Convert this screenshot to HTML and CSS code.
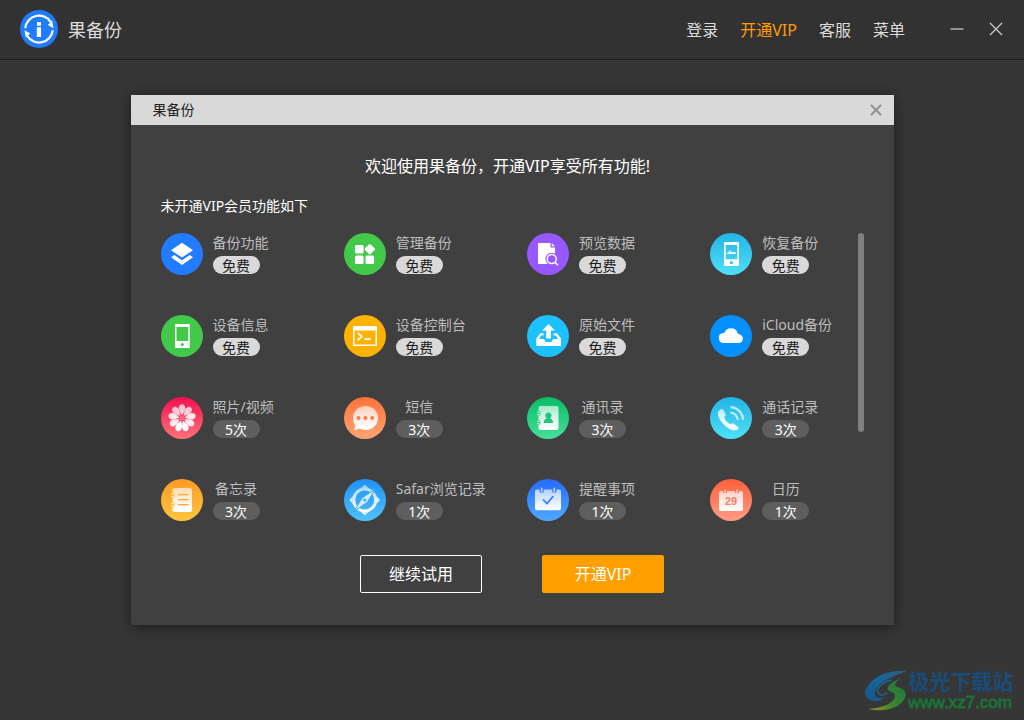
FILE: index.html
```html
<!DOCTYPE html>
<html lang="zh-CN">
<head>
<meta charset="utf-8">
<meta name="viewport" content="width=device-width, initial-scale=1">
<title>果备份</title>
<link rel="stylesheet" href="styles.css">
</head>
<body>
<svg class="defs" width="0" height="0" aria-hidden="true">
  <defs>
    <linearGradient id="g-cyan" x2="0" y2="1"><stop stop-color="#22b4e6"/><stop offset="1" stop-color="#4fe0f8"/></linearGradient>
    <linearGradient id="g-rose" x2="0" y2="1"><stop stop-color="#f40f50"/><stop offset="1" stop-color="#ff7277"/></linearGradient>
    <linearGradient id="g-orange" x2="0" y2="1"><stop stop-color="#ff7239"/><stop offset="1" stop-color="#ffa575"/></linearGradient>
    <linearGradient id="g-green" x2="0" y2="1"><stop stop-color="#07bd66"/><stop offset="1" stop-color="#47df99"/></linearGradient>
    <linearGradient id="g-amber" x2="0" y2="1"><stop stop-color="#ff9928"/><stop offset="1" stop-color="#fcc63d"/></linearGradient>
    <linearGradient id="g-sky" x2="0" y2="1"><stop stop-color="#2091f5"/><stop offset="1" stop-color="#4fc1fc"/></linearGradient>
    <linearGradient id="g-blue" x2="0" y2="1"><stop stop-color="#266aff"/><stop offset="1" stop-color="#50a9ff"/></linearGradient>
    <linearGradient id="g-coral" x2="0" y2="1"><stop stop-color="#ff603a"/><stop offset="1" stop-color="#ff9c84"/></linearGradient>
    <linearGradient id="g-white" gradientUnits="userSpaceOnUse" x1="0" y1="8" x2="0" y2="32"><stop stop-color="#fff" stop-opacity=".6"/><stop offset="1" stop-color="#fff"/></linearGradient>
    <linearGradient id="g-wave" x1="1" y1="0" x2="0" y2="1"><stop stop-color="#2a5f80"/><stop offset=".5" stop-color="#17659b"/><stop offset="1" stop-color="#175487"/></linearGradient>
    <linearGradient id="g-leaf" x1="1" y1="0" x2="0" y2="1"><stop stop-color="#197542"/><stop offset=".6" stop-color="#3d8530"/><stop offset="1" stop-color="#a09025"/></linearGradient>
  </defs>
</svg>

<header class="topbar">
  <div class="brand">
    <svg class="brand-logo" viewBox="0 0 38 38" aria-hidden="true">
      <circle cx="19" cy="19" r="19" fill="#1f7cff"/>
      <g fill="none" stroke="#fff" stroke-width="2.2">
        <path d="M5.300 18.200A13.800 13.800 0 0 1 30.600 11.800"/>
        <path d="M32.700 20.400A13.800 13.800 0 0 1 7.400 26.200"/>
      </g>
      <path d="M27.800 14.900 33.500 18.200 32.200 10.600zM10.200 23.600 4.500 20.200 5.800 27.600z" fill="#fff"/>
      <path d="M17 12h4v3.800h-4zM16.800 17.200H21V27h-4.200z" fill="#fff"/>
    </svg>
    <span>果备份</span>
  </div>
  <nav class="menu">
    <a href="#login">登录</a>
    <a class="vip" href="#vip">开通VIP</a>
    <a href="#service">客服</a>
    <a href="#menu">菜单</a>
  </nav>
  <div class="window-controls">
    <button type="button" aria-label="最小化"><svg viewBox="0 0 14 14"><path d="M.5 7h13"/></svg></button>
    <button type="button" aria-label="关闭"><svg viewBox="0 0 14 14"><path d="M1 1l12 12M13 1 1 13"/></svg></button>
  </div>
</header>

<main class="stage">
  <section class="dialog" role="dialog" aria-labelledby="dialog-title">
    <div class="dialog-bar">
      <h1 id="dialog-title">果备份</h1>
      <button type="button" aria-label="关闭"><svg viewBox="0 0 12 12"><path d="M1 1l10 10M11 1 1 11"/></svg></button>
    </div>
    <p class="welcome">欢迎使用果备份，开通VIP享受所有功能!</p>
    <h2 class="subtitle">未开通VIP会员功能如下</h2>

    <div class="features-wrap">
      <ul class="features">
        <li class="feature">
          <svg viewBox="0 0 42 42"><circle cx="21" cy="21" r="21" fill="#217cff"/><g fill="#fff"><path d="M21 9.800 32 17.300 21 24.500 10 17.300z"/><path d="M10 24.200 13.300 22 21 27.300 28.700 22 32 24.200 21 32z"/></g></svg>
          <div class="info"><span class="name">备份功能</span><span class="badge free">免费</span></div>
        </li>
        <li class="feature">
          <svg viewBox="0 0 42 42"><circle cx="21" cy="21" r="21" fill="#42c94a"/><g fill="#fff"><rect x="11" y="12" width="8.600" height="8.600" rx="1.500"/><rect x="11" y="22.400" width="8.600" height="8.600" rx="1.500"/><rect x="21.500" y="22.400" width="8.600" height="8.600" rx="1.500"/><rect x="21.800" y="12.200" width="8" height="8" rx="1.200" transform="rotate(45 25.800 16.200)"/></g></svg>
          <div class="info"><span class="name">管理备份</span><span class="badge free">免费</span></div>
        </li>
        <li class="feature">
          <svg viewBox="0 0 42 42"><circle cx="21" cy="21" r="21" fill="#9759ff"/><path d="M12 10h11.500v4.500H28V31H12a1 1 0 0 1-1-1V11a1 1 0 0 1 1-1zM24.800 10.200 28 13.300h-3.200z" fill="#fff"/><circle cx="24.700" cy="26" r="6.300" fill="#9759ff"/><path d="M26 31h5v2h-5z" fill="#9759ff"/><g fill="none" stroke="#fff" stroke-width="1.500"><circle cx="24.700" cy="26" r="4.500"/><path d="M28 29.200 31 32.200"/></g></svg>
          <div class="info"><span class="name">预览数据</span><span class="badge free">免费</span></div>
        </li>
        <li class="feature">
          <svg viewBox="0 0 42 42"><circle cx="21" cy="21" r="21" fill="url(#g-cyan)"/><path fill="#fff" fill-rule="evenodd" d="M15 9h13a1 1 0 0 1 1 1v22a1 1 0 0 1-1 1H15a1 1 0 0 1-1-1V10a1 1 0 0 1 1-1zm.7 3v14.300h11.600V12z"/><circle cx="21.400" cy="29.700" r="1.600" fill="#37c6ed"/><path d="M17 20.200 20.700 17v2.200h5v1.700h-8.500z" fill="#fff"/></svg>
          <div class="info"><span class="name">恢复备份</span><span class="badge free">免费</span></div>
        </li>
        <li class="feature">
          <svg viewBox="0 0 42 42"><circle cx="21" cy="21" r="21" fill="#42c94a"/><path fill="#fff" fill-rule="evenodd" d="M15 9h12.800a1 1 0 0 1 1 1v22a1 1 0 0 1-1 1H15a1 1 0 0 1-1-1V10a1 1 0 0 1 1-1zm.5 3v14h11.700V12z"/><circle cx="21.300" cy="29.600" r="1.500" fill="#42c94a"/></svg>
          <div class="info"><span class="name">设备信息</span><span class="badge free">免费</span></div>
        </li>
        <li class="feature">
          <svg viewBox="0 0 42 42"><circle cx="21" cy="21" r="21" fill="#ffb100"/><path fill="#fff" fill-rule="evenodd" d="M10 11h22a1 1 0 0 1 1 1v18a1 1 0 0 1-1 1H10a1 1 0 0 1-1-1V12a1 1 0 0 1 1-1zm.5 4.500v14h21v-14z"/><path d="M13.700 17.700 17.800 21.500 13.700 25.300M20.300 24.200h6.500" fill="none" stroke="#fff" stroke-width="1.800"/></svg>
          <div class="info"><span class="name">设备控制台</span><span class="badge free">免费</span></div>
        </li>
        <li class="feature">
          <svg viewBox="0 0 42 42"><circle cx="21" cy="21" r="21" fill="#1dc1ff"/><g fill="#fff"><path d="M21.500 9 28 15.500h-4.200V23.500h-4.600v-8H15z"/><path d="M16.500 18.300h-3.200L9.300 23.500V31H34v-7.500l-4.100-5.200h-3.300v2.300h2.200L31 24h-5l-1.500 3h-6L17 24h-5l2.200-3.400h2.300z"/></g></svg>
          <div class="info"><span class="name">原始文件</span><span class="badge free">免费</span></div>
        </li>
        <li class="feature">
          <svg viewBox="0 0 42 42"><circle cx="21" cy="21" r="21" fill="#0590ff"/><path fill="#fff" d="M14 28a5 5 0 0 1-1.200-9.900h1.500a7 7 0 0 1 13.400 0l.8 1.100A4.400 4.400 0 1 1 28.500 28z"/></svg>
          <div class="info"><span class="name">iCloud备份</span><span class="badge free">免费</span></div>
        </li>
        <li class="feature">
          <svg viewBox="0 0 42 42"><circle cx="21" cy="21" r="21" fill="url(#g-rose)"/><g fill="#fff"><g fill-opacity=".75"><path id="petal" d="M21 18.200C19 15.500 17.800 13 17.800 11c0-2.300 1.400-3.800 3.200-3.800s3.200 1.500 3.200 3.800c0 2-1.200 4.500-3.200 7.200z"/><use href="#petal" transform="rotate(40 21 21)"/><use href="#petal" transform="rotate(320 21 21)"/></g><g fill-opacity=".88"><use href="#petal" transform="rotate(80 21 21)"/><use href="#petal" transform="rotate(280 21 21)"/><use href="#petal" transform="rotate(120 21 21)"/><use href="#petal" transform="rotate(240 21 21)"/></g><use href="#petal" transform="rotate(160 21 21)"/><use href="#petal" transform="rotate(200 21 21)"/></g><circle cx="21" cy="21" r="2.600" fill="#fb6682"/></svg>
          <div class="info"><span class="name">照片/视频</span><span class="badge">5次</span></div>
        </li>
        <li class="feature">
          <svg viewBox="0 0 42 42"><circle cx="21" cy="21" r="21" fill="url(#g-orange)"/><path fill="url(#g-white)" d="M21.500 9C28.500 9 34 14.200 34 21s-5.500 12-12.500 12c-2.200 0-4.100-.5-5.900-1.400-1.600 1-3.600 1.500-6 1.400 1.200-1 1.800-2.500 1.700-4.500A11.800 11.800 0 0 1 9 21C9 14.200 14.500 9 21.500 9z"/><g fill="#f97c4e"><circle cx="14.500" cy="21" r="2"/><circle cx="21.400" cy="21" r="2"/><circle cx="28.200" cy="21" r="2"/></g></svg>
          <div class="info"><span class="name">短信</span><span class="badge">3次</span></div>
        </li>
        <li class="feature">
          <svg viewBox="0 0 42 42"><circle cx="21" cy="21" r="21" fill="url(#g-green)"/><rect x="11.500" y="9" width="20" height="24" rx="2" fill="url(#g-white)"/><g fill="none"><path d="M10.500 16.300h3M10.500 25.500h3" stroke="#1fca7b" stroke-width="4"/><path d="M10 15.200h2.500a1.200 1.200 0 0 1 0 2.300H10M10 24.400h2.500a1.200 1.200 0 0 1 0 2.300H10" stroke="#c5f5dd"/></g><path fill="#1fc778" d="M16.700 26c0-3 1.600-4.200 3.200-4.700a3.100 3.100 0 1 1 3 0c1.600.5 3.200 1.700 3.200 4.700z"/></svg>
          <div class="info"><span class="name">通讯录</span><span class="badge">3次</span></div>
        </li>
        <li class="feature">
          <svg viewBox="0 0 42 42"><circle cx="21" cy="21" r="21" fill="url(#g-cyan)"/><path fill="url(#g-white)" d="M9.600 13c1.700-1.500 3-1.300 4 .4l1.700 3c.7 1.500.3 2.600-1 3.700.5 3 3 6 6.200 7.100 1.400-1.200 2.600-1.200 4 0l3.200 2.600c1.200 1 1.200 1.700.1 2.500-2.300 1.400-5.200 1.200-8.600-.6C14.400 28.700 10 24.200 8.400 19.200 7.600 16.700 8 14.300 9.600 13z"/><g fill="none" stroke="#fff" stroke-opacity=".72" stroke-width="2.200"><path d="M20.500 10.200A13 13 0 0 1 33 22.700"/><path d="M20.300 15.500a7.500 7.500 0 0 1 7.300 7.400"/></g></svg>
          <div class="info"><span class="name">通话记录</span><span class="badge">3次</span></div>
        </li>
        <li class="feature">
          <svg viewBox="0 0 42 42"><circle cx="21" cy="21" r="21" fill="url(#g-amber)"/><rect x="11.500" y="9" width="19.500" height="24" rx="2" fill="url(#g-white)"/><g fill="none"><path d="M10.500 16.300h3M10.500 25.500h3" stroke="#ffab30" stroke-width="4"/><path d="M10 15.200h2.500a1.200 1.200 0 0 1 0 2.300H10M10 24.400h2.500a1.200 1.200 0 0 1 0 2.300H10" stroke="#fff0cf"/><path d="M17 15.700h10.700M17 20.700h10.700M17 25.600h10.700" stroke="#ffa638" stroke-width="1.200"/></g></svg>
          <div class="info"><span class="name">备忘录</span><span class="badge">3次</span></div>
        </li>
        <li class="feature">
          <svg viewBox="0 0 42 42"><circle cx="21" cy="21" r="21" fill="url(#g-sky)"/><circle cx="20.700" cy="21" r="11" fill="none" stroke="url(#g-white)" stroke-width="3"/><path fill="url(#g-white)" d="M16.700 9.200 20.700 5.700 24.700 9.200A12.500 12.500 0 0 0 16.700 9.200zM32.500 17 36 21 32.500 25A12.500 12.500 0 0 0 32.500 17zM24.700 32.800 20.700 36.300 16.700 32.800A12.500 12.500 0 0 0 24.700 32.800zM8.900 25 5.400 21 8.900 17A12.500 12.500 0 0 0 8.900 25z"/><path d="M31.600 9.800 23.300 23.300 9.800 32.500 18.200 18.800z" fill="#d5edff" stroke="#35a3f8"/><circle cx="20.700" cy="21" r="1.500" fill="#35a5f7"/></svg>
          <div class="info"><span class="name">Safar浏览记录</span><span class="badge">1次</span></div>
        </li>
        <li class="feature">
          <svg viewBox="0 0 42 42"><circle cx="21" cy="21" r="21" fill="url(#g-blue)"/><rect x="8" y="10.500" width="26" height="20.800" rx="1.800" fill="url(#g-white)"/><path d="M14.700 9.500v4M27.300 9.500v4" stroke="#3279ff" stroke-width="4"/><path d="M14.700 9.200v3.300M27.300 9.200v3.300" stroke="#bdd6ff" stroke-width="1.600" stroke-linecap="round"/><path d="M16 20.700 20 24.500 26.200 17.300" fill="none" stroke="#3079ff" stroke-width="1.700"/></svg>
          <div class="info"><span class="name">提醒事项</span><span class="badge">1次</span></div>
        </li>
        <li class="feature">
          <svg viewBox="0 0 42 42"><circle cx="21" cy="21" r="21" fill="url(#g-coral)"/><rect x="9" y="12" width="24" height="20" rx="1.800" fill="url(#g-white)"/><path d="M15 11v3M27 11v3" stroke="#ff714e" stroke-width="4"/><path d="M15 11v2.700M27 11v2.700" stroke="#ffc2b2" stroke-width="1.600" stroke-linecap="round"/><text class="day" x="21" y="26" text-anchor="middle">29</text></svg>
          <div class="info"><span class="name">日历</span><span class="badge">1次</span></div>
        </li>
      </ul>
      <div class="scroll-thumb"></div>
    </div>

    <div class="actions">
      <button type="button" class="btn">继续试用</button>
      <button type="button" class="btn primary">开通VIP</button>
    </div>
  </section>
</main>

<div class="watermark">
  <svg viewBox="0 0 44 42" aria-hidden="true">
    <path fill="url(#g-wave)" d="M43 1C26 0 13 5 6 13-1 21-1 28 9 31c5 1 9-1 11-4-4 2-8 1-9-2-1-6 5-12 13-16C30 6 36 3 43 1z"/>
    <path fill="none" stroke="#1c6393" stroke-width="1.500" d="M28 10C17 12 11 20 15 24c3 2 7 1 8-2"/>
    <path fill="url(#g-leaf)" d="M38 8C26 12 22 17 24 20c2 2 8 2 7 7-2 6-12 11-27 12 18 4 33-2 37-11 3-7-3-10-8-11-4-2-1-6 5-9z"/>
  </svg>
  <div class="watermark-text"><span class="site">极光下载站</span><span class="url">www.xz7.com</span></div>
</div>
</body>
</html>
```
FILE: styles.css
```css
* { box-sizing: border-box; }

body {
  margin: 0;
  min-height: 100vh;
  background: #363636;
  color: #dcdcdc;
  font-family: "Noto Sans", "Noto Sans CJK SC", sans-serif;
  font-size: 14px;
}

button { font: inherit; cursor: pointer; }

.defs { position: absolute; }

.topbar {
  display: flex;
  align-items: center;
  height: 60px;
  padding: 0 21px 2px 20px;
  background: #323232;
  border-bottom: 1px solid #1c1c1c;
}

.brand {
  display: flex;
  align-items: center;
  gap: 10px;
  margin-right: auto;
  font-size: 18px;
}

.brand-logo { width: 38px; height: 38px; }

.menu {
  display: flex;
  gap: 22px;
  font-size: 16px;
}

.menu a { color: inherit; text-decoration: none; }
.menu .vip { color: #ff9c00; }

.window-controls {
  display: flex;
  gap: 25px;
  margin-left: 45px;
}

.window-controls button,
.dialog-bar button {
  display: flex;
  padding: 0;
  border: 0;
  background: none;
}

.window-controls svg {
  width: 14px;
  height: 14px;
  stroke: #c8c8c8;
  stroke-width: 1.3;
}

.stage { padding: 35px 16px; }

.dialog {
  max-width: 763px;
  margin: 0 auto;
  padding-bottom: 32px;
  background: #404040;
  box-shadow: 0 2px 14px rgba(0, 0, 0, .5);
}

.dialog-bar {
  display: flex;
  align-items: center;
  justify-content: space-between;
  height: 30px;
  padding: 0 12px 0 22px;
  background: #d9d9d9;
  color: #222;
}

.dialog-bar h1 { margin: 0; font-size: 14px; font-weight: 400; line-height: 18px; }

.dialog-bar svg {
  width: 12px;
  height: 12px;
  stroke: #929292;
  stroke-width: 2;
}

.welcome {
  margin: 0;
  padding: 29px 9px 0 0;
  color: #fff;
  font-size: 16px;
  line-height: 24px;
  text-align: center;
}

.subtitle {
  margin: 18px 30px 17px;
  color: #fff;
  font-size: 14px;
  font-weight: 400;
  line-height: 20px;
}

.features-wrap { position: relative; padding-left: 30px; }

.features {
  display: grid;
  grid-template-columns: repeat(4, 1fr);
  row-gap: 40px;
  margin: 0;
  padding: 0;
  list-style: none;
}

.feature { display: flex; gap: 10px; }
.feature svg { flex: none; width: 42px; height: 42px; }

.info {
  display: flex;
  flex-direction: column;
  align-items: flex-start;
  gap: 3px;
}

.name {
  min-width: 47px;
  color: #bebebe;
  line-height: 20px;
  text-align: center;
  white-space: nowrap;
}

.badge {
  width: 47px;
  height: 18px;
  border-radius: 9px;
  background: #5e5e5e;
  color: #fff;
  line-height: 19px;
  text-align: center;
}

.badge.free { background: #d9d9d9; color: #1c1c1c; }

.day {
  fill: #f87b5d;
  font: bold 11px "Liberation Sans", sans-serif;
}

.scroll-thumb {
  position: absolute;
  top: 0;
  right: 30px;
  width: 6px;
  height: 199px;
  border-radius: 3px;
  background: #808080;
}

.actions {
  display: flex;
  justify-content: center;
  gap: 60px;
  margin-top: 34px;
}

.btn {
  width: 122px;
  height: 38px;
  padding: 0 0 2px;
  border: 1px solid #fff;
  border-radius: 2px;
  background: none;
  color: #fff;
  font-size: 16px;
}

.btn.primary { border-color: #ff9f00; background: #ff9f00; }

.watermark {
  position: fixed;
  right: 11px;
  bottom: 7px;
  display: flex;
  align-items: center;
}

.watermark svg { width: 44px; height: 42px; }

.watermark-text {
  display: flex;
  flex-direction: column;
  font-weight: 700;
}

.site { color: #194d7d; font-size: 21px; line-height: 24px; }

.url {
  color: #1c7138;
  font-family: "Liberation Sans", sans-serif;
  font-size: 17px;
  font-weight: 400;
  line-height: 20px;
  -webkit-text-stroke: 1px #1c7138;
}
```
